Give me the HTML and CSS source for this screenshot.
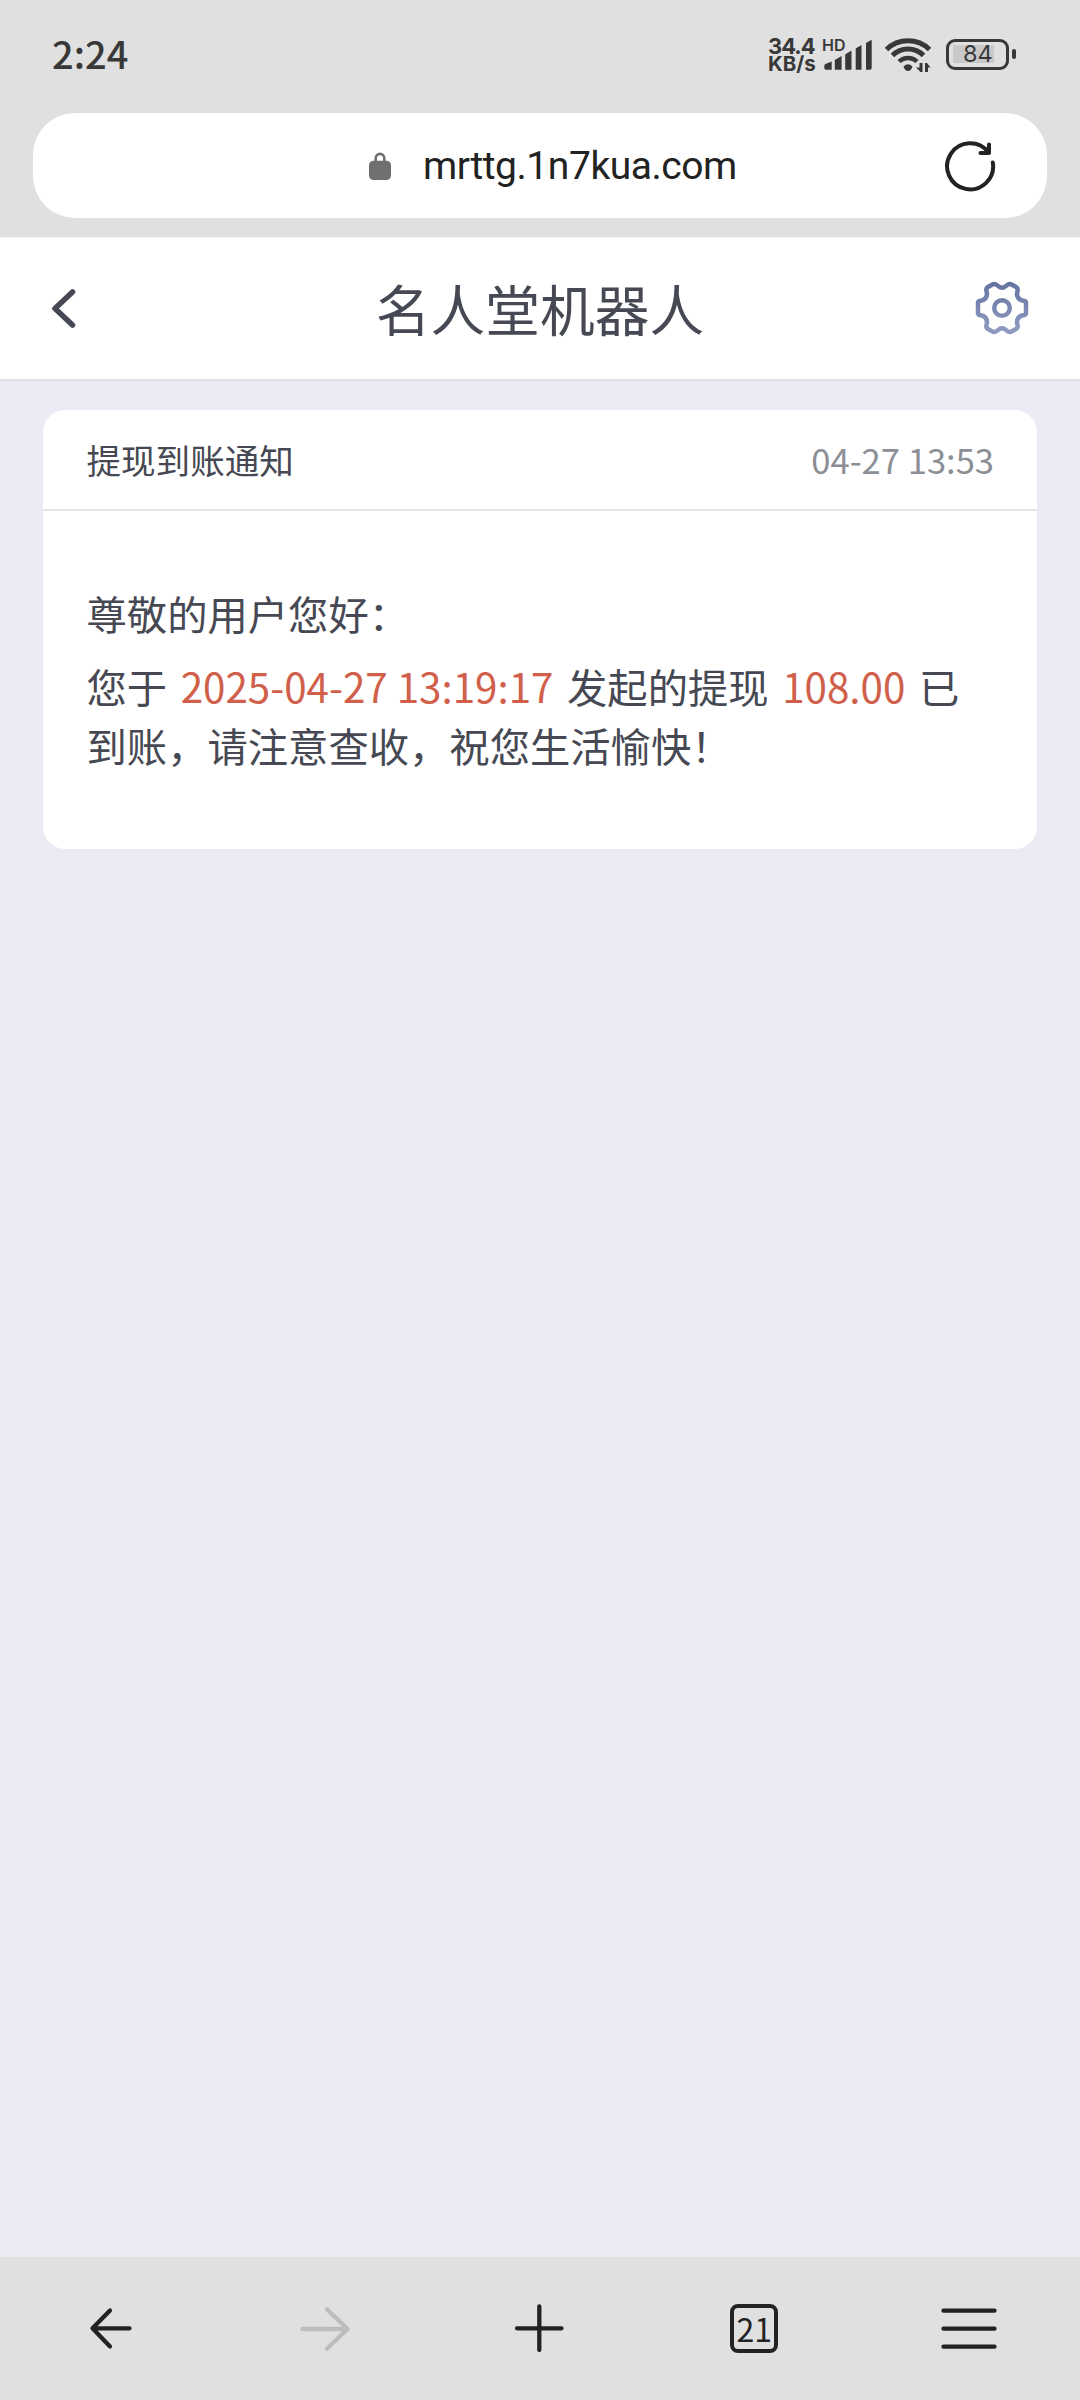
FILE: index.html
```html
<!DOCTYPE html>
<html lang="zh-CN">
<head>
<meta charset="utf-8">
<title>名人堂机器人</title>
<link rel="stylesheet" href="styles.css">
</head>
<body>
<div class="chrome">
  <div class="status">
    <span class="clock">2:24</span>
    <div class="indicators">
      <div class="speed"><span class="rate">34.4</span><span class="unit">KB/s</span></div>
      <div class="signal">
        <svg width="52" height="40" viewBox="822 34 52 40" fill="#383838">
          <path d="M824.3 65.5Q824.300 64.500 825.500 64L831.7 61.5V69.8H826a1.7 1.7 0 0 1-1.7-1.7zM834.8 60L841.6 56V69.8H834.8zM845.2 54.5L851.500 50.5V69.8H845.2zM855.7 48.5L861.5 45V69.8H855.7zM866 43L871.7 39.7V68a1.8 1.8 0 0 1-1.8 1.8H866z"/>
        </svg>
        <span class="hd">HD</span>
      </div>
      <svg class="wifi" width="48" height="40" viewBox="884 34 48 40" fill="none" stroke="#383838" stroke-width="5">
        <path d="M886.5 49.5A31 31 0 0 1 929.5 49.5"/>
        <path d="M892.5 55.500A22 22 0 0 1 923.500 55.500"/>
        <path d="M899 61.500A13 13 0 0 1 917 61.500" stroke-width="4.5"/>
        <path d="M903.5 66.5Q908 62 912.5 66.5Q911 71 908 71Q905 71 903.500 66.500z" fill="#383838" stroke="none"/>
        <path d="M922.500 63V72H920.500L916 67.500H919.500V63zM925 72V63H927L930.500 67.500H928V72z" fill="#383838" stroke="none"/>
      </svg>
      <div class="battery"><span class="level">84</span></div>
    </div>
  </div>
  <div class="address">
    <svg class="lock" width="22" height="28" viewBox="0 0 22 28"><rect y="8.700" width="22" height="19.300" rx="4.500" fill="#707070"/><path d="M6.700 11V6.200a4.300 4.300 0 0 1 8.600 0V11" fill="none" stroke="#707070" stroke-width="2.600"/></svg>
    <span class="url">mrttg.1n7kua.com</span>
    <svg class="reload" width="54" height="54" viewBox="943 139 54 54" fill="none" stroke="#222" stroke-width="4" stroke-linecap="round" stroke-linejoin="round"><path d="M992.800 162.500A23 23 0 1 1 988.500 152.500M989 144.500V153H980.500"/></svg>
  </div>
</div>
<header class="nav">
  <svg width="28" height="42" viewBox="50 287 28 42" fill="none" stroke="#464953" stroke-width="5.500" stroke-linecap="round" stroke-linejoin="round"><path d="M72.500 292L55 308.500L72.500 325"/></svg>
  <h1>名人堂机器人</h1>
  <svg width="56" height="56" viewBox="-28 -28 56 56" fill="none" stroke="url(#g)" stroke-width="4.500" stroke-linejoin="round">
    <defs><linearGradient id="g" gradientUnits="userSpaceOnUse" x1="0" y1="-26" x2="0" y2="26"><stop offset="0" stop-color="#64739f"/><stop offset="1" stop-color="#919cc4"/></linearGradient></defs>
    <path d="M-9.500 -23.500Q-8 -24.500 -6 -23.500L-2.500 -21Q0 -19.500 2.500 -21L6 -23.500Q8 -24.500 9.500 -23.500L14.500 -20.700Q16.200 -19.500 15.500 -17L15 -14.500Q15 -8.500 21 -7.300L22.500 -7Q24 -6.500 24 -5V5Q24 6.500 22.500 7L21 7.300Q15 8.500 15 14.500L15.500 17Q16.200 19.500 14.500 20.700L9.500 23.500Q8 24.500 6 23.500L2.500 21Q0 19.500 -2.500 21L-6 23.500Q-8 24.500 -9.500 23.500L-14.500 20.700Q-16.200 19.500 -15.500 17L-15 14.500Q-15 8.500 -21 7.300L-22.500 7Q-24 6.500 -24 5V-5Q-24 -6.500 -22.500 -7L-21 -7.300Q-15 -8.500 -15 -14.500L-15.500 -17Q-16.200 -19.500 -14.500 -20.700Z"/>
    <circle r="7.800"/>
  </svg>
</header>
<main class="content">
  <article class="card">
    <div class="card-head"><h2>提现到账通知</h2><time>04-27 13:53</time></div>
    <div class="card-body">
      <p class="greeting">尊敬的用户您好：</p>
      <p class="message">您于 <em>2025-04-27 13:19:17</em> 发起的提现 <em>108.00</em> 已到账，请注意查收，祝您生活愉快！</p>
    </div>
  </article>
</main>
<nav class="toolbar">
  <svg width="60" height="60" viewBox="80 2298 60 60"><path d="M129.500 2328.300H93M110 2310.500L92.500 2328.300L110 2346.500"/></svg>
  <svg class="off" width="60" height="60" viewBox="295 2298 60 60"><path d="M302.500 2329H347M327 2309.300L347.500 2329L327 2348.700"/></svg>
  <svg width="60" height="60" viewBox="510 2298 60 60"><path d="M517 2328.300H561.500M539.300 2306.500V2350"/></svg>
  <div class="tabs">21</div>
  <svg width="60" height="60" viewBox="939 2298 60 60"><path d="M943.500 2310.700H994.500M943.500 2328.700H994.500M943.500 2346.700H994.500"/></svg>
</nav>
</body>
</html>
```
FILE: styles.css
```css
* { box-sizing: border-box; }
body {
  margin: 0;
  height: 2400px;
  display: flex;
  flex-direction: column;
  background: #ebebf5;
  color: #464953;
  font-family: "Noto Sans CJK SC", sans-serif;
}
svg { display: block; flex: none; }
h1, h2, p { margin: 0; font-weight: 400; }
.chrome { height: 238px; background: #e0e0e0; border-bottom: 1px solid #f0f0f0; }
.status {
  height: 113px;
  padding: 0 65px 5px 52px;
  display: flex;
  justify-content: space-between;
  align-items: center;
  color: #383838;
}
.clock { font-size: 38px; font-weight: 500; line-height: 40px; padding-bottom: 2px; }
.indicators { display: flex; align-items: center; }
.speed {
  display: flex;
  flex-direction: column;
  width: 54px;
  padding-top: 2px;
  font: 700 21px/18px Inter, sans-serif;
}
.rate { font-size: 22px; letter-spacing: -1px; }
.unit { font-size: 20.5px; }
.signal { position: relative; width: 62px; }
.hd { position: absolute; left: 0; top: 3px; font: 600 16px/16px Inter, sans-serif; }
.wifi { margin-right: 14px; }
.battery {
  position: relative;
  width: 63px;
  height: 31px;
  margin-right: 6px;
  border: 3.5px solid #383838;
  border-radius: 9px;
  padding: 3px 4px;
}
.battery::after {
  content: "";
  position: absolute;
  right: -10px;
  top: 7px;
  width: 4px;
  height: 10px;
  border-radius: 2px;
  background: #383838;
}
.level {
  display: block;
  width: 41px;
  height: 18px;
  padding-left: 10px;
  background: #c9c9c9;
  font: 400 23.5px/18px Inter, sans-serif;
}
.address {
  height: 105px;
  margin: 0 33px;
  padding: 0 50px 0 336px;
  border-radius: 42px;
  background: #fff;
  display: flex;
  align-items: center;
}
.url {
  margin-left: 32px;
  padding-top: 1px;
  font: 400 39px/50px Roboto, sans-serif;
  letter-spacing: -0.45px;
  color: #222;
}
.reload { margin-left: auto; }
.nav {
  height: 143px;
  padding: 0 50px 2px;
  background: #fff;
  border-bottom: 2px solid #e0e0e2;
  display: flex;
  justify-content: space-between;
  align-items: center;
}
.nav h1 { font-size: 54.72px; line-height: 70px; padding-left: 28px; }
.content { flex: 1; padding: 29px 43px; }
.card { height: 439px; background: #fff; border-radius: 22px; }
.card-head {
  height: 101px;
  padding: 0 43px 2px 43.5px;
  border-bottom: 2px solid #e4e5e6;
  display: flex;
  justify-content: space-between;
  align-items: center;
  font-size: 34.56px;
}
.card-head h2 { font-size: inherit; }
.card-head time { color: #8d8f96; }
.card-body { padding: 72px 43px 0 43.5px; font-size: 40.32px; line-height: 59px; }
.message { margin-top: 14px; }
.message em { font-style: normal; color: #d0604a; margin: 0 4.6px; }
.toolbar {
  height: 143px;
  padding: 0 81px 1px 80px;
  background: #e0e0e0;
  display: flex;
  justify-content: space-between;
  align-items: center;
}
.toolbar path { fill: none; stroke: #222; stroke-width: 4.3; stroke-linecap: round; stroke-linejoin: round; }
.toolbar .off path { stroke: #bdbdbd; }
.tabs {
  width: 48px;
  height: 49px;
  margin: 0 6px;
  border: 4px solid #222;
  border-radius: 8px;
  color: #222;
  font: 400 32px/40px "Noto Sans CJK SC", sans-serif;
  text-align: center;
}
```
